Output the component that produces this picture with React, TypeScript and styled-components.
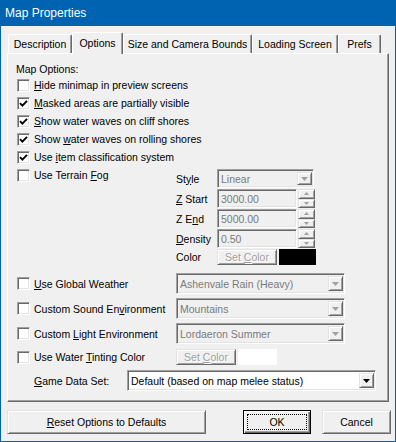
import React from "react";
import styled, { createGlobalStyle, css } from "styled-components";

const GlobalStyle = createGlobalStyle`
  html, body {
    margin: 0;
    padding: 0;
    background: #f0f0f0;
  }
  body {
    font-family: "Liberation Sans", Arial, sans-serif;
    font-size: 10.5px;
    color: #000;
  }
  u {
    text-underline-offset: 1px;
  }
`;

const raised = css`
  border: 1px solid;
  border-color: #e3e3e3 #696969 #696969 #e3e3e3;
  box-shadow: inset 1px 1px 0 #fff, inset -1px -1px 0 #a0a0a0;
`;

const sunken = css`
  border: 1px solid;
  border-color: #a0a0a0 #fff #fff #a0a0a0;
  box-shadow: inset 1px 1px 0 #696969, inset -1px -1px 0 #e3e3e3;
`;

const Window = styled.div`
  width: 396px;
  height: 442px;
  box-sizing: border-box;
  border: 1px solid #0063b1;
  border-top: none;
  background: #f0f0f0;
  display: flex;
  flex-direction: column;
`;

const TitleBar = styled.div`
  height: 26px;
  flex: none;
  background: #0063b1;
  color: #fff;
  padding-left: 4px;
  display: flex;
  align-items: center;
  font-size: 12px;
`;

const Body = styled.div`
  flex: 1;
  display: flex;
  flex-direction: column;
  padding: 0 6px 7px 6px;
`;

const TabStrip = styled.div`
  height: 27px;
  box-sizing: border-box;
  padding: 6px 0 0 1px;
  display: flex;
  align-items: flex-end;
`;

const Tab = styled.div<{ $w: number; $active?: boolean }>`
  width: ${(p) => p.$w}px;
  height: ${(p) => (p.$active ? 22 : 19)}px;
  box-sizing: border-box;
  flex: none;
  display: flex;
  align-items: center;
  justify-content: center;
  padding-bottom: ${(p) => (p.$active ? 2 : 0)}px;
  border: 1px solid;
  border-bottom: none;
  border-color: #fff #696969 transparent #fff;
  border-radius: 2px 2px 0 0;
  box-shadow: inset -1px 0 0 #a0a0a0;
  background: #f0f0f0;
  position: relative;
  z-index: ${(p) => (p.$active ? 2 : 0)};
  margin-bottom: ${(p) => (p.$active ? -1 : 0)}px;
`;

const Panel = styled.div`
  height: 349px;
  box-sizing: border-box;
  border: 1px solid;
  border-color: #fff #696969 #696969 #fff;
  box-shadow: inset -1px -1px 0 #a0a0a0;
  padding: 7px 0 0 9px;
  display: flex;
  flex-direction: column;
`;

const GroupLabel = styled.div`
  height: 15px;
  margin-left: -1px;
  display: flex;
  align-items: center;
`;

const CheckRow = styled.label`
  height: 18px;
  display: flex;
  align-items: center;
  gap: 4px;
  white-space: nowrap;
`;

const Box = styled.span`
  width: 13px;
  height: 13px;
  box-sizing: border-box;
  flex: none;
  background: #fff;
  ${sunken};
  display: flex;
  align-items: center;
  justify-content: center;
`;

const FogSection = styled.div`
  display: flex;
  align-items: flex-start;
`;

const Lead = styled.div`
  width: 159px;
  flex: none;
  display: flex;
  align-items: center;
`;

const FogGrid = styled.div`
  margin-top: 3px;
  display: grid;
  grid-template-columns: 41px auto;
  grid-template-rows: 20px 20px 20px 20px 16px;
  align-items: start;
`;

const FieldLabel = styled.div<{ $h?: number }>`
  height: ${(p) => p.$h ?? 19}px;
  display: flex;
  align-items: center;
  white-space: nowrap;
`;

const Inline = styled.div<{ $gap: number }>`
  display: flex;
  align-items: center;
  gap: ${(p) => p.$gap}px;
`;

const Lower = styled.div`
  margin-top: 8px;
  display: flex;
  flex-direction: column;
  gap: 4px;
`;

const OptionRow = styled.div<{ $h: number }>`
  height: ${(p) => p.$h}px;
  display: flex;
  align-items: center;
`;

const GameLabel = styled.div`
  width: 93px;
  padding-left: 17px;
  flex: none;
`;

const Combo = styled.div<{ $w: number; $h: number; $disabled?: boolean }>`
  width: ${(p) => p.$w}px;
  height: ${(p) => p.$h}px;
  box-sizing: border-box;
  ${sunken};
  background: ${(p) => (p.$disabled ? "#f0f0f0" : "#fff")};
  color: ${(p) => (p.$disabled ? "#7a7a7a" : "#000")};
  display: flex;
  align-items: center;
  padding: 2px 1px 2px 3px;
  white-space: nowrap;
`;

const ComboText = styled.span`
  flex: 1;
  overflow: hidden;
`;

const DropButton = styled.span`
  width: 15px;
  align-self: stretch;
  box-sizing: border-box;
  ${raised};
  background: #f0f0f0;
  display: flex;
  align-items: center;
  justify-content: center;
`;

const Edit = styled.div<{ $w: number }>`
  width: ${(p) => p.$w}px;
  height: 19px;
  box-sizing: border-box;
  ${sunken};
  color: #7a7a7a;
  display: flex;
  align-items: center;
  padding-left: 3px;
`;

const Spinner = styled.div`
  width: 17px;
  height: 19px;
  display: flex;
  flex-direction: column;
`;

const SpinHalf = styled.span`
  flex: 1;
  box-sizing: border-box;
  ${raised};
  display: flex;
  align-items: center;
  justify-content: center;
`;

const PushButton = styled.div<{ $w: number; $h: number; $disabled?: boolean; $default?: boolean }>`
  width: ${(p) => p.$w}px;
  height: ${(p) => p.$h}px;
  box-sizing: border-box;
  flex: none;
  ${raised};
  background: #f0f0f0;
  display: flex;
  align-items: center;
  justify-content: center;
  position: relative;
  color: ${(p) => (p.$disabled ? "#a0a0a0" : "#000")};
  text-shadow: ${(p) => (p.$disabled ? "1px 1px 0 #fff" : "none")};
  ${(p) =>
    p.$default &&
    css`
      border-color: #000;
      box-shadow: inset 1px 1px 0 #fff, inset -1px -1px 0 #696969, inset -2px -2px 0 #a0a0a0;
      &::after {
        content: "";
        position: absolute;
        inset: 3px;
        border: 1px dotted #000;
      }
    `}
`;

const Swatch = styled.span<{ $color: string; $w: number }>`
  width: ${(p) => p.$w}px;
  height: 16px;
  background: ${(p) => p.$color};
`;

const ButtonBar = styled.div`
  margin-top: 8px;
  margin-right: -2px;
  display: flex;
  align-items: center;
`;

const Spacer = styled.div`
  flex: 1;
`;

const Gap = styled.div<{ $w: number }>`
  width: ${(p) => p.$w}px;
  flex: none;
`;

function Check({ checked }: { checked?: boolean }) {
  return (
    <Box>
      {checked && (
        <svg width="9" height="9" viewBox="0 0 9 9">
          <path d="M1 4.2 L3.4 6.6 L8 1.8" fill="none" stroke="#000" strokeWidth="1.9" />
        </svg>
      )}
    </Box>
  );
}

function Arrow({ color, small }: { color: string; small?: boolean }) {
  return small ? (
    <svg width="5" height="3" viewBox="0 0 5 3">
      <polygon points="0,0 5,0 2.5,3" fill={color} />
    </svg>
  ) : (
    <svg width="7" height="4" viewBox="0 0 7 4">
      <polygon points="0,0 7,0 3.5,4" fill={color} />
    </svg>
  );
}

function UpArrow({ color }: { color: string }) {
  return (
    <svg width="5" height="3" viewBox="0 0 5 3">
      <polygon points="0,3 5,3 2.5,0" fill={color} />
    </svg>
  );
}

function Option({ checked, children }: { checked?: boolean; children: React.ReactNode }) {
  return (
    <CheckRow>
      <Check checked={checked} />
      <span>{children}</span>
    </CheckRow>
  );
}

function DropDown({ w, h, value, disabled }: { w: number; h: number; value: string; disabled?: boolean }) {
  return (
    <Combo $w={w} $h={h} $disabled={disabled}>
      <ComboText>{value}</ComboText>
      <DropButton>
        <Arrow color={disabled ? "#a0a0a0" : "#000"} />
      </DropButton>
    </Combo>
  );
}

function SpinEdit({ value }: { value: string }) {
  return (
    <Inline $gap={1}>
      <Edit $w={80}>{value}</Edit>
      <Spinner>
        <SpinHalf>
          <UpArrow color="#a0a0a0" />
        </SpinHalf>
        <SpinHalf>
          <Arrow color="#a0a0a0" small />
        </SpinHalf>
      </Spinner>
    </Inline>
  );
}

export default function App() {
  return (
    <>
      <GlobalStyle />
      <Window>
        <TitleBar>Map Properties</TitleBar>
        <Body>
          <TabStrip>
            <Tab $w={64}>Description</Tab>
            <Tab $w={51} $active>
              Options
            </Tab>
            <Tab $w={129}>Size and Camera Bounds</Tab>
            <Tab $w={86}>Loading Screen</Tab>
            <Tab $w={43}>Prefs</Tab>
          </TabStrip>
          <Panel>
            <GroupLabel>Map Options:</GroupLabel>
            <Option>
              <u>H</u>ide minimap in preview screens
            </Option>
            <Option checked>
              <u>M</u>asked areas are partially visible
            </Option>
            <Option checked>
              <u>S</u>how water waves on cliff shores
            </Option>
            <Option checked>
              Show <u>w</u>ater waves on rolling shores
            </Option>
            <Option checked>
              Use <u>i</u>tem classification system
            </Option>
            <FogSection>
              <Lead>
                <Option>
                  Use Terrain <u>F</u>og
                </Option>
              </Lead>
              <FogGrid>
                <FieldLabel>
                  <span>
                    St<u>y</u>le
                  </span>
                </FieldLabel>
                <DropDown w={97} h={19} value="Linear" disabled />
                <FieldLabel>
                  <span>
                    <u>Z</u> Start
                  </span>
                </FieldLabel>
                <SpinEdit value="3000.00" />
                <FieldLabel>
                  <span>
                    Z E<u>n</u>d
                  </span>
                </FieldLabel>
                <SpinEdit value="5000.00" />
                <FieldLabel>
                  <span>
                    <u>D</u>ensity
                  </span>
                </FieldLabel>
                <SpinEdit value="0.50" />
                <FieldLabel $h={16}>Color</FieldLabel>
                <Inline $gap={2}>
                  <PushButton $w={60} $h={16} $disabled>
                    <span>
                      Set <u>C</u>olor
                    </span>
                  </PushButton>
                  <Swatch $color="#000" $w={37} />
                </Inline>
              </FogGrid>
            </FogSection>
            <Lower>
              <OptionRow $h={21}>
                <Lead>
                  <Option>
                    <u>U</u>se Global Weather
                  </Option>
                </Lead>
                <DropDown w={169} h={21} value="Ashenvale Rain (Heavy)" disabled />
              </OptionRow>
              <OptionRow $h={21}>
                <Lead>
                  <Option>
                    Custom Sound En<u>v</u>ironment
                  </Option>
                </Lead>
                <DropDown w={169} h={21} value="Mountains" disabled />
              </OptionRow>
              <OptionRow $h={21}>
                <Lead>
                  <Option>
                    Custom <u>L</u>ight Environment
                  </Option>
                </Lead>
                <DropDown w={169} h={21} value="Lordaeron Summer" disabled />
              </OptionRow>
              <OptionRow $h={18}>
                <Lead>
                  <Option>
                    Use Water <u>T</u>inting Color
                  </Option>
                </Lead>
                <Inline $gap={2}>
                  <PushButton $w={60} $h={16} $disabled>
                    <span>
                      Set <u>C</u>olor
                    </span>
                  </PushButton>
                  <Swatch $color="#fff" $w={39} />
                </Inline>
              </OptionRow>
              <OptionRow $h={21}>
                <GameLabel>
                  <u>G</u>ame Data Set:
                </GameLabel>
                <DropDown w={249} h={21} value="Default (based on map melee status)" />
              </OptionRow>
            </Lower>
          </Panel>
          <ButtonBar>
            <PushButton $w={199} $h={24}>
              <span>
                <u>R</u>eset Options to Defaults
              </span>
            </PushButton>
            <Spacer />
            <PushButton $w={68} $h={24} $default>
              OK
            </PushButton>
            <Gap $w={11} />
            <PushButton $w={69} $h={24}>
              Cancel
            </PushButton>
          </ButtonBar>
        </Body>
      </Window>
    </>
  );
}
